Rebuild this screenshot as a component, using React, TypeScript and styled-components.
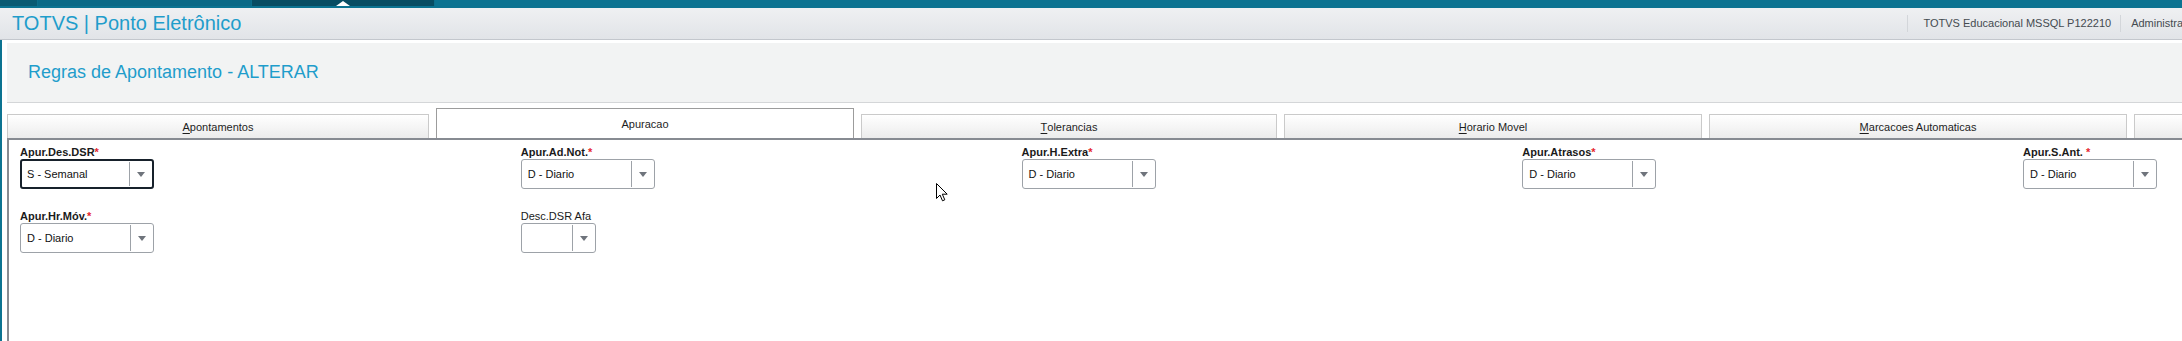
import React from "react";
import styled, { createGlobalStyle } from "styled-components";

const GlobalStyle = createGlobalStyle`
  html, body { margin: 0; padding: 0; background: #ffffff; overflow: hidden; }
  body { font-family: "Liberation Sans", Arial, sans-serif; }
  * { box-sizing: border-box; }
`;

const Page = styled.div`
  position: relative;
  width: 2182px;
  height: 341px;
  overflow: hidden;
  display: flex;
  flex-direction: column;
  background: #ffffff;
`;

const TopBar = styled.div`
  display: flex;
  flex: none;
  height: 8px;
  background: #0c7391;
`;

const TopSegment = styled.div<{ $w: number; $bg: string; $pad?: number }>`
  flex: none;
  width: ${(p) => p.$w}px;
  height: 6px;
  background: ${(p) => p.$bg};
  border-right: 1px solid #0d6f8b;
  display: flex;
  align-items: flex-end;
  padding-left: ${(p) => p.$pad ?? 0}px;
`;

const Caret = styled.div`
  width: 0;
  height: 0;
  border-left: 7px solid transparent;
  border-right: 7px solid transparent;
  border-bottom: 5px solid #ffffff;
`;

const Header = styled.header`
  flex: none;
  display: flex;
  align-items: center;
  width: 2208px;
  height: 32px;
  padding-left: 12px;
  background: linear-gradient(#eff0f2, #e1e4e8);
  border-bottom: 1px solid #c3c7cd;
`;

const AppTitle = styled.div`
  font-size: 20px;
  color: #1f9dcb;
  white-space: nowrap;
`;

const HeaderInfo = styled.div`
  margin-left: auto;
  display: flex;
  align-items: center;
`;

const InfoItem = styled.div<{ $pl: number }>`
  height: 17px;
  line-height: 17px;
  font-size: 11px;
  color: #444a50;
  white-space: nowrap;
  border-left: 1px solid #d3d6da;
  padding: 0 9px 0 ${(p) => p.$pl}px;
`;

const Body = styled.div`
  flex: 1;
  display: flex;
  min-height: 0;
`;

const LeftStrip = styled.div`
  flex: none;
  width: 2px;
  background: #0c7391;
`;

const Main = styled.main`
  flex: 1;
  min-width: 0;
  display: flex;
  flex-direction: column;
  padding-left: 5px;
`;

const SubHeader = styled.div`
  flex: none;
  margin-top: 3px;
  height: 60px;
  display: flex;
  align-items: center;
  padding-left: 21px;
  background: #f2f3f3;
  border-bottom: 1px solid #d4d6d8;
`;

const PageTitle = styled.h1`
  margin: 0;
  font-weight: normal;
  font-size: 18px;
  color: #1f9dcb;
  white-space: nowrap;
`;

const TabBar = styled.div`
  flex: none;
  margin-top: 5px;
  height: 30px;
  display: flex;
  align-items: flex-end;
  gap: 7px;
`;

const Tab = styled.div<{ $active?: boolean; $w: number }>`
  flex: none;
  width: ${(p) => p.$w}px;
  height: ${(p) => (p.$active ? 30 : 24)}px;
  display: flex;
  align-items: center;
  justify-content: center;
  font-size: 11px;
  color: #1e1e1e;
  border: 1px solid ${(p) => (p.$active ? "#9c9c9c" : "#cacaca")};
  border-bottom: none;
  background: ${(p) => (p.$active ? "#ffffff" : "linear-gradient(#ffffff, #ececec)")};
  white-space: nowrap;
  u { text-decoration-thickness: 1px; text-underline-offset: 2px; }
`;

const Panel = styled.section`
  flex: 1;
  border-left: 2px solid #878b92;
  border-top: 2px solid #878b92;
  padding: 6px 0 0 11px;
`;

const FieldGrid = styled.div`
  display: grid;
  grid-template-columns: repeat(5, 500.75px);
  row-gap: 21px;
  align-items: start;
`;

const Field = styled.div`
  display: flex;
  flex-direction: column;
  align-items: flex-start;
`;

const Label = styled.label<{ $bold?: boolean }>`
  font-size: 11px;
  line-height: 13px;
  font-weight: ${(p) => (p.$bold ? "bold" : "normal")};
  color: #1a1a1a;
  white-space: nowrap;
`;

const Req = styled.span`
  color: #e5262e;
  font-weight: bold;
`;

const SelectBox = styled.div<{ $w: number; $focused?: boolean }>`
  display: flex;
  width: ${(p) => p.$w}px;
  height: 30px;
  background: #ffffff;
  border: ${(p) => (p.$focused ? "2px solid #17212b" : "1px solid #9da2a8")};
  border-radius: 3px;
`;

const SelectValue = styled.div<{ $focused?: boolean }>`
  flex: 1;
  display: flex;
  align-items: center;
  padding-left: ${(p) => (p.$focused ? 5 : 6)}px;
  font-size: 11px;
  color: #111111;
  white-space: nowrap;
`;

const ArrowBox = styled.div`
  flex: none;
  width: 23px;
  margin: 1px 0;
  border-left: 1px solid #9da2a8;
  display: flex;
  align-items: center;
  justify-content: center;
`;

const Arrow = styled.div`
  width: 0;
  height: 0;
  border-left: 4px solid transparent;
  border-right: 4px solid transparent;
  border-top: 5px solid #6f747c;
`;

const Cursor = styled.svg`
  position: absolute;
  left: 936px;
  top: 183px;
`;

type FieldDef = {
  label: string;
  req?: "tight" | "space";
  bold?: boolean;
  value: string;
  width: number;
  focused?: boolean;
};

const row1: FieldDef[] = [
  { label: "Apur.Des.DSR", req: "tight", bold: true, value: "S - Semanal", width: 134, focused: true },
  { label: "Apur.Ad.Not.", req: "tight", bold: true, value: "D - Diario", width: 134 },
  { label: "Apur.H.Extra", req: "tight", bold: true, value: "D - Diario", width: 134 },
  { label: "Apur.Atrasos", req: "tight", bold: true, value: "D - Diario", width: 134 },
  { label: "Apur.S.Ant.", req: "space", bold: true, value: "D - Diario", width: 134 },
];

const row2: FieldDef[] = [
  { label: "Apur.Hr.Móv.", req: "tight", bold: true, value: "D - Diario", width: 134 },
  { label: "Desc.DSR Afa", value: "", width: 75 },
];

function ComboField({ f }: { f: FieldDef }) {
  return (
    <Field>
      <Label $bold={f.bold}>
        {f.label}
        {f.req && <Req>{f.req === "space" ? " *" : "*"}</Req>}
      </Label>
      <SelectBox $w={f.width} $focused={f.focused}>
        <SelectValue $focused={f.focused}>{f.value}</SelectValue>
        <ArrowBox>
          <Arrow />
        </ArrowBox>
      </SelectBox>
    </Field>
  );
}

const tabs: { first: string; rest: string; w: number; active?: boolean }[] = [
  { first: "A", rest: "pontamentos", w: 422 },
  { first: "", rest: "Apuracao", w: 418, active: true },
  { first: "T", rest: "olerancias", w: 416 },
  { first: "H", rest: "orario Movel", w: 418 },
  { first: "M", rest: "arcacoes Automaticas", w: 418 },
  { first: "", rest: "", w: 418 },
];

export default function App() {
  return (
    <>
      <GlobalStyle />
      <Page>
        <TopBar>
          <TopSegment $w={38} $bg="#0a5a72" />
          <TopSegment $w={214} $bg="#0b6986" />
          <TopSegment $w={183} $bg="#084d63" $pad={84}>
            <Caret />
          </TopSegment>
        </TopBar>
        <Header>
          <AppTitle>TOTVS | Ponto Eletrônico</AppTitle>
          <HeaderInfo>
            <InfoItem $pl={15}>TOTVS Educacional MSSQL P122210</InfoItem>
            <InfoItem $pl={10}>Administrador</InfoItem>
          </HeaderInfo>
        </Header>
        <Body>
          <LeftStrip />
          <Main>
            <SubHeader>
              <PageTitle>Regras de Apontamento - ALTERAR</PageTitle>
            </SubHeader>
            <TabBar>
              {tabs.map((t, i) => (
                <Tab key={i} $active={t.active} $w={t.w}>
                  {t.first && <u>{t.first}</u>}
                  {t.rest}
                </Tab>
              ))}
            </TabBar>
            <Panel>
              <FieldGrid>
                {row1.map((f, i) => (
                  <ComboField key={"a" + i} f={f} />
                ))}
                {row2.map((f, i) => (
                  <ComboField key={"b" + i} f={f} />
                ))}
              </FieldGrid>
            </Panel>
          </Main>
        </Body>
        <Cursor width="13" height="19" viewBox="0 0 13 19">
          <path
            d="M0.5 0.5 L0.5 15.5 L4 12 L6.5 17.8 L8.8 16.8 L6.3 11.2 L11.2 11.2 Z"
            fill="#ffffff"
            stroke="#000000"
            strokeWidth="1"
            strokeLinejoin="miter"
          />
        </Cursor>
      </Page>
    </>
  );
}
